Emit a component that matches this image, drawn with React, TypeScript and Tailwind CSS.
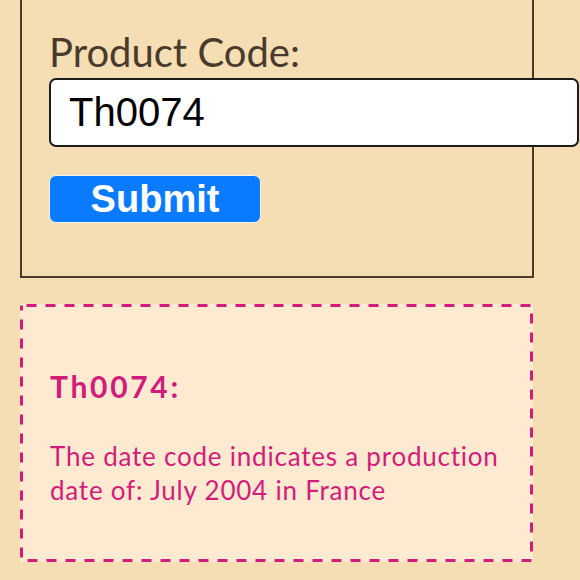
import { useState } from "react"

const App = () => {
  const [code, setCode] = useState("Th0074")

  return (
    <div className="w-[580px] h-[580px] overflow-hidden bg-[#f5deb4] font-['Lato',sans-serif]">
      <div className="ml-[20px] -mt-[20px] w-[514px] border-2 border-[#4a3a2b] pl-[27px] pt-[46px] pb-[53px]">
        <label className="block text-[40px] leading-[48px] text-[#4a3a2b] mb-[2px]">
          Product Code:
        </label>
        <input
          type="text"
          value={code}
          onChange={(e) => setCode(e.target.value)}
          className="block w-[530px] h-[69px] bg-white border-2 border-[#1c1c1c] rounded-[7px] pl-[18px] text-[40px] text-black font-['Liberation_Sans',Arial,sans-serif] outline-none"
        />
        <button
          type="button"
          className="mt-[28px] w-[212px] h-[48px] bg-[#0a7bff] border border-[#f3f3f3] rounded-[7px] text-white font-bold text-[38px] leading-none font-['Liberation_Sans',Arial,sans-serif]"
        >
          Submit
        </button>
      </div>

      <div className="relative ml-[20px] mt-[26px] w-[513px] h-[258px] bg-[#fdead0] pl-[30px] pt-[64px] pr-[20px] text-[#d21c7c]">
        <svg className="absolute inset-0 pointer-events-none" width="513" height="258">
          <rect
            x="1.5"
            y="1.5"
            width="510"
            height="255"
            fill="none"
            stroke="#d21c7c"
            strokeWidth="3"
            strokeDasharray="10 9"
            strokeDashoffset="-5"
          />
        </svg>
        <h3 className="text-[30px] leading-[36px] font-bold tracking-[0.09em]">Th0074:</h3>
        <p className="mt-[35px] text-[26px] leading-[34px] tracking-[0.03em]">
          The date code indicates a production date of: July 2004 in France
        </p>
      </div>
    </div>
  )
}

export default App
